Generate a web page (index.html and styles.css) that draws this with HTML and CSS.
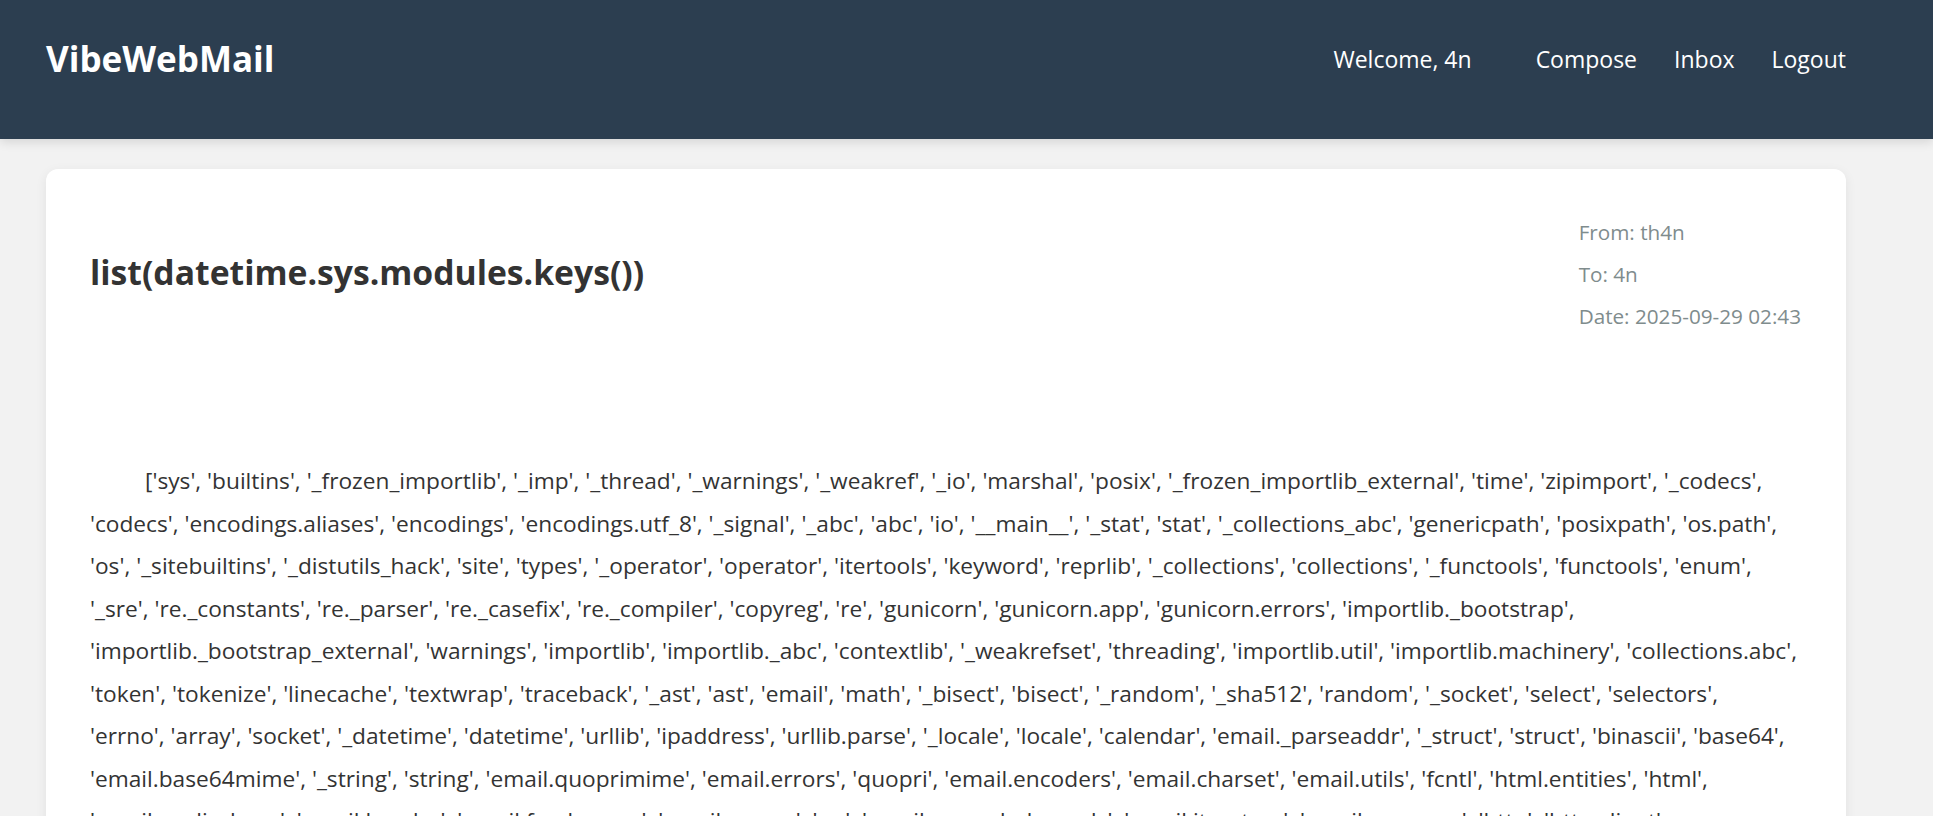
FILE: index.html
```html
<!DOCTYPE html>
<html lang="en">
<head>
<meta charset="utf-8">
<title>VibeWebMail - list(datetime.sys.modules.keys())</title>
<link rel="stylesheet" href="styles.css">
</head>
<body>
<header class="topbar">
  <div class="topbar-inner">
    <div class="logo">VibeWebMail</div>
    <nav class="nav">
      <span class="welcome">Welcome, 4n</span>
      <a class="nav-link" href="#">Compose</a>
      <a class="nav-link" href="#">Inbox</a>
      <a class="nav-link" href="#">Logout</a>
    </nav>
  </div>
</header>
<main class="main">
  <article class="card">
    <div class="mail-head">
      <h1 class="subject">list(datetime.sys.modules.keys())</h1>
      <div class="meta">
        <p class="meta-line">From: th4n</p>
        <p class="meta-line">To: 4n</p>
        <p class="meta-line">Date: 2025-09-29 02:43</p>
      </div>
    </div>
    <div class="mail-body">['sys', 'builtins', '_frozen_importlib', '_imp', '_thread', '_warnings', '_weakref', '_io', 'marshal', 'posix', '_frozen_importlib_external', 'time', 'zipimport', '_codecs', 'codecs', 'encodings.aliases', 'encodings', 'encodings.utf_8', '_signal', '_abc', 'abc', 'io', '__main__', '_stat', 'stat', '_collections_abc', 'genericpath', 'posixpath', 'os.path', 'os', '_sitebuiltins', '_distutils_hack', 'site', 'types', '_operator', 'operator', 'itertools', 'keyword', 'reprlib', '_collections', 'collections', '_functools', 'functools', 'enum', '_sre', 're._constants', 're._parser', 're._casefix', 're._compiler', 'copyreg', 're', 'gunicorn', 'gunicorn.app', 'gunicorn.errors', 'importlib._bootstrap', 'importlib._bootstrap_external', 'warnings', 'importlib', 'importlib._abc', 'contextlib', '_weakrefset', 'threading', 'importlib.util', 'importlib.machinery', 'collections.abc', 'token', 'tokenize', 'linecache', 'textwrap', 'traceback', '_ast', 'ast', 'email', 'math', '_bisect', 'bisect', '_random', '_sha512', 'random', '_socket', 'select', 'selectors', 'errno',&nbsp;'array', 'socket', '_datetime', 'datetime', 'urllib', 'ipaddress', 'urllib.parse', '_locale', 'locale', 'calendar', 'email._parseaddr', '_struct', 'struct', 'binascii', 'base64', 'email.base64mime', '_string', 'string', 'email.quoprimime', 'email.errors', 'quopri', 'email.encoders', 'email.charset', 'email.utils', 'fcntl', 'html.entities', 'html', 'email._policybase', 'email.header', 'email.feedparser', 'email.parser', 'uu', 'email._encoded_words', 'email.iterators', 'email.message', 'http', 'http.client', 'email.policy', 'ssl', 'mimetypes', 'shutil']</div>
  </article>
</main>
</body>
</html>
```
FILE: styles.css
```css
html, body {
  margin: 0;
  padding: 0;
}

body {
  background: #f2f2f2;
  font-family: "Open Sans", "Noto Sans", sans-serif;
  color: #333333;
}

.topbar {
  background: #2c3e50;
  height: 139px;
  box-shadow: 0 3px 10px rgba(0, 0, 0, 0.12);
  position: relative;
}

.topbar-inner {
  width: 1800px;
  margin-left: 46px;
  height: 117px;
  display: flex;
  align-items: center;
  justify-content: space-between;
}

.logo {
  color: #ffffff;
  font-weight: 700;
  font-size: 35px;
}

.nav {
  display: flex;
  align-items: center;
  font-size: 23px;
  color: #ffffff;
}

.welcome {
  margin-right: 27px;
}

.nav-link {
  color: #ffffff;
  text-decoration: none;
  margin-left: 37px;
}

.main {
  padding: 30px 0 0 46px;
}

.card {
  width: 1800px;
  box-sizing: border-box;
  background: #ffffff;
  border-radius: 12px;
  box-shadow: 0 3px 12px rgba(0, 0, 0, 0.07);
  padding: 45px 35px 45px 44px;
  min-height: 700px;
}

.mail-head {
  display: flex;
  align-items: center;
  justify-content: space-between;
  padding-right: 10px;
}

.subject {
  margin: 0;
  font-size: 33.7px;
  font-weight: 700;
  color: #333333;
  position: relative;
  top: -2px;
}

.meta {
  display: flex;
  flex-direction: column;
  gap: 6px;
}

.meta-line {
  margin: 0;
  font-size: 20.7px;
  line-height: 36px;
  color: #7f8c8d;
}

.mail-body {
  margin-top: 126px;
  font-size: 22.7px;
  line-height: 42.5px;
  text-indent: 55px;
  color: #333333;
}
```
